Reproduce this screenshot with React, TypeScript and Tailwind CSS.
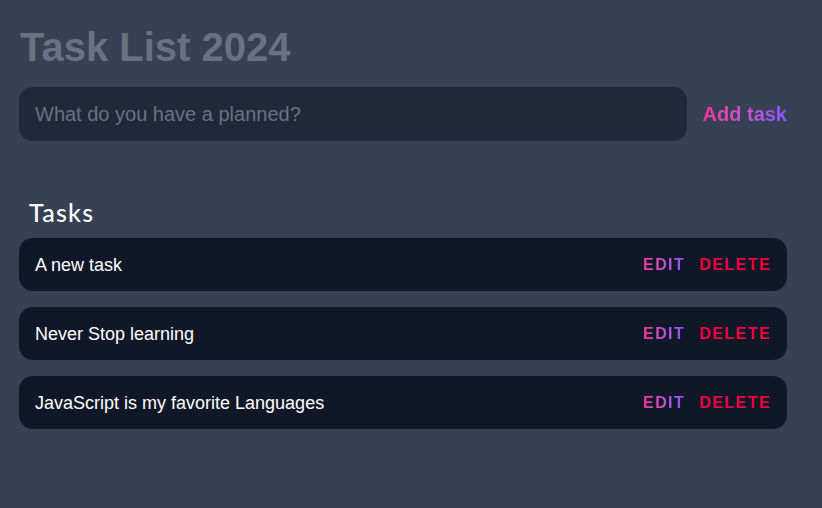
import React from "react";

const tasks = [
  "A new task",
  "Never Stop learning",
  "JavaScript is my favorite Languages",
];

const App: React.FC = () => {
  return (
    <div className="min-h-screen bg-gray-700 font-['Liberation_Sans',Arial,sans-serif]">
      <div className="w-[768px] ml-[19px] pt-[27px]">
        {/* Title */}
        <h1 className="ml-[1px] text-[40px] leading-[40px] font-bold text-gray-500">Task List 2024</h1>

        {/* New task form */}
        <div className="mt-5 flex items-center gap-4">
          <input
            type="text"
            placeholder="What do you have a planned?"
            className="flex-1 h-[54px] rounded-[14px] bg-gray-800 px-4 text-xl text-white placeholder:text-gray-500 outline-none"
          />
          <button className="text-xl font-bold bg-gradient-to-r from-pink-500 to-violet-500 bg-clip-text text-transparent">
            Add task
          </button>
        </div>

        {/* Task list */}
        <h2 className="mt-[55px] ml-[10px] text-[25px] leading-8 font-medium tracking-wider text-white font-['Lato',sans-serif]">
          Tasks
        </h2>
        <div className="mt-[10px] flex flex-col gap-4">
          {tasks.map((t) => (
            <div
              key={t}
              className="h-[53px] flex items-center justify-between rounded-[14px] bg-gray-900 px-4"
            >
              <span className="text-lg text-white">{t}</span>
              <div className="flex items-center gap-[14px]">
                <button className="text-base font-bold uppercase tracking-[0.09em] bg-gradient-to-r from-pink-500 to-violet-500 bg-clip-text text-transparent">
                  Edit
                </button>
                <button className="text-base font-bold uppercase tracking-[0.09em] text-rose-600">Delete</button>
              </div>
            </div>
          ))}
        </div>
      </div>
    </div>
  );
};

export default App;
